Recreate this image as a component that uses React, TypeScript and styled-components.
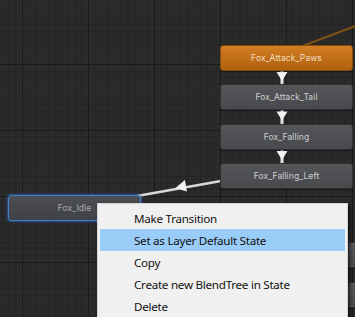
import React from "react";
import styled, { createGlobalStyle, css } from "styled-components";

const Global = createGlobalStyle`
  html, body { margin: 0; padding: 0; background: #2a2a2a; overflow: hidden; }
  #root { width: 355px; height: 317px; }
`;

const Canvas = styled.div`
  position: relative;
  width: 355px;
  height: 317px;
  overflow: hidden;
  background-color: #2b2b2b;
  background-image:
    linear-gradient(to right, #1a1a1a 1px, transparent 1px),
    linear-gradient(to bottom, #1a1a1a 1px, transparent 1px),
    linear-gradient(to right, #242424 1px, transparent 1px),
    linear-gradient(to bottom, #242424 1px, transparent 1px);
  background-size: 66px 66px, 66px 66px, 6.6px 6.6px, 6.6px 6.6px;
  background-position: 22px 64px, 22px 64px, 22px 64px, 22px 64px;
  font-family: Inter, "Noto Sans", sans-serif;
`;

const Wires = styled.svg`
  position: absolute;
  left: 0;
  top: 0;
  width: 355px;
  height: 317px;
  pointer-events: none;
`;

type Variant = "default" | "orange" | "selected";

const Node = styled.div<{ $x: number; $y: number; $w?: number; $variant?: Variant }>`
  position: absolute;
  left: ${(p) => p.$x}px;
  top: ${(p) => p.$y}px;
  width: ${(p) => p.$w ?? 133}px;
  height: 26px;
  box-sizing: border-box;
  border-radius: 3px;
  display: flex;
  align-items: center;
  justify-content: center;
  font-size: 8.5px;
  letter-spacing: 0.1px;
  border: 1px solid #323235;
  background: linear-gradient(#55565a, #48494d);
  color: #cfcfcf;
  box-shadow: 0 1px 1px rgba(0, 0, 0, 0.45);
  ${(p) =>
    p.$variant === "orange" &&
    css`
      border-color: #8a4d10;
      background: linear-gradient(#d27e22, #b0610f);
      color: #f3dfc2;
    `}
  ${(p) =>
    p.$variant === "selected" &&
    css`
      border: 1px solid #3f7fd0;
      background: linear-gradient(#4d4e53, #414247);
      color: #a9a9a9;
      box-shadow: 0 0 2px 1px rgba(50, 120, 210, 0.55);
    `}
`;

const Menu = styled.div`
  position: absolute;
  left: 97px;
  top: 203px;
  width: 251px;
  height: 130px;
  box-sizing: border-box;
  background: #f0f0f0;
  border: 1px solid #d4d4d4;
  box-shadow: 2px 2px 3px rgba(0, 0, 0, 0.6);
  padding: 3px 2px;
  display: flex;
  flex-direction: column;
  font-family: "Noto Sans", "Open Sans", sans-serif;
`;

const MenuItem = styled.div<{ $active?: boolean }>`
  height: 22px;
  display: flex;
  align-items: center;
  padding-left: 34px;
  font-size: 11.6px;
  letter-spacing: -0.25px;
  color: #111;
  background: ${(p) => (p.$active ? "#99ccf6" : "transparent")};
`;

const nodes: { label: string; x: number; y: number; w?: number; v?: Variant }[] = [
  { label: "Fox_Attack_Paws", x: 220, y: 45, v: "orange" },
  { label: "Fox_Attack_Tail", x: 220, y: 84 },
  { label: "Fox_Falling", x: 220, y: 124 },
  { label: "Fox_Falling_Left", x: 220, y: 163 },
  { label: "", x: 347, y: 242 },
  { label: "", x: 347, y: 282 },
  { label: "Fox_Idle", x: 8, y: 195, v: "selected" },
];

const vArrows = [77.5, 117, 156.5];

export default function App() {
  return (
    <>
      <Global />
      <Canvas>
        <Wires viewBox="0 0 355 317">
          <line x1="358" y1="25" x2="300" y2="47" stroke="#7d5312" strokeWidth="2" />
          {vArrows.map((cy) => (
            <g key={cy}>
              <line x1="282" y1={cy - 7} x2="282" y2={cy + 7} stroke="#e2e2e2" strokeWidth="3" />
              <polygon points={`276.5,${cy - 5.5} 287.5,${cy - 5.5} 282,${cy + 3.5}`} fill="#f2f2f2" />
            </g>
          ))}
          <line x1="221" y1="181" x2="137" y2="196" stroke="#d8d8d8" strokeWidth="2.5" />
          <polygon points="175.5,188 186.9,191.5 184.9,180" fill="#f2f2f2" />
        </Wires>
        {nodes.map((n, i) => (
          <Node key={i} $x={n.x} $y={n.y} $w={n.w} $variant={n.v}>
            {n.label}
          </Node>
        ))}
        <Menu>
          <MenuItem>Make Transition</MenuItem>
          <MenuItem $active>Set as Layer Default State</MenuItem>
          <MenuItem>Copy</MenuItem>
          <MenuItem>Create new BlendTree in State</MenuItem>
          <MenuItem>Delete</MenuItem>
        </Menu>
      </Canvas>
    </>
  );
}
